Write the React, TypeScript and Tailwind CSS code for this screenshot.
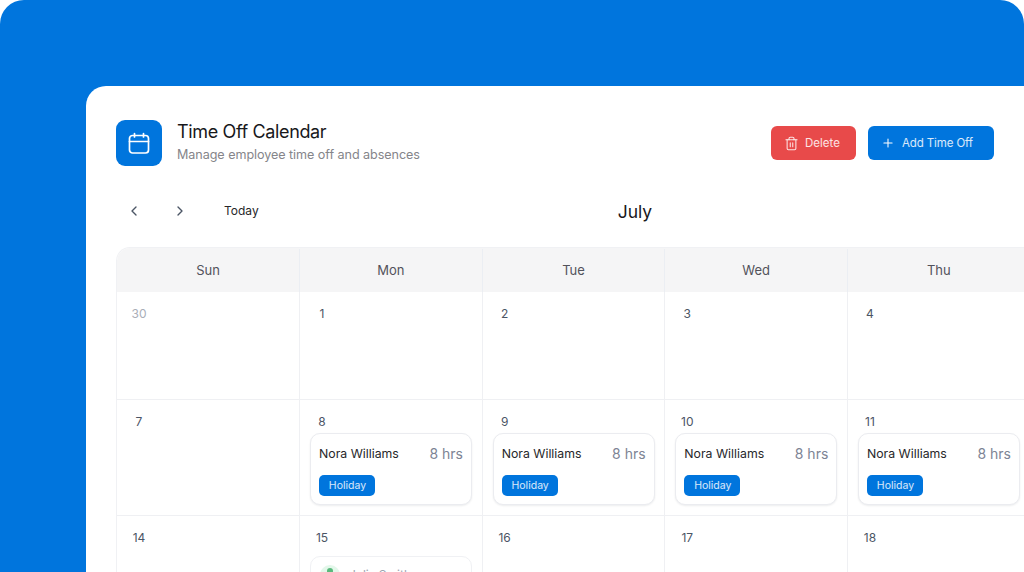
import { ChevronLeft, ChevronRight, Plus, Trash2 } from "lucide-react";

type Day = { label: string; muted?: boolean; event?: boolean; partial?: boolean };

const weekDays = ["Sun", "Mon", "Tue", "Wed", "Thu"];

const weeks: { height: string; days: Day[] }[] = [
    {
        height: "h-[108px]",
        days: [{ label: "30", muted: true }, { label: "1" }, { label: "2" }, { label: "3" }, { label: "4" }],
    },
    {
        height: "h-[116px]",
        days: [
            { label: "7" },
            { label: "8", event: true },
            { label: "9", event: true },
            { label: "10", event: true },
            { label: "11", event: true },
        ],
    },
    {
        height: "h-[80px]",
        days: [{ label: "14" }, { label: "15", partial: true }, { label: "16" }, { label: "17" }, { label: "18" }],
    },
];

function EventCard() {
    return (
        <div className="ml-[10px] mt-px h-[72px] w-[162px] rounded-[10px] border border-[#ebecf0] bg-white px-2 pt-[10px] shadow-[0_1px_2px_rgba(16,24,40,0.08)]">
            <div className="flex items-center justify-between">
                <span className="text-[12.3px] leading-5 text-[#27272a]">Nora Williams</span>
                <span className="text-[14px] leading-5 text-[#7d8494]">8 hrs</span>
            </div>
            <span className="mt-[11px] flex h-[21px] w-14 items-center justify-center rounded-[5px] bg-[#0075dd] pl-px pt-px text-[10.5px] text-white/85">
                Holiday
            </span>
        </div>
    );
}

function PartialCard() {
    return (
        <div className="ml-[10px] mt-2 h-[72px] w-[162px] rounded-[10px] border border-[#f0f1f4] bg-white pl-[9px] pt-2">
            <div className="flex items-center gap-[9px]">
                <span className="flex h-5 w-5 items-start justify-center rounded-full bg-[#e3f7ea] pt-[3px]">
                    <span className="h-[6px] w-[6px] rounded-full bg-[#59b97c]" />
                </span>
                <span className="text-[12px] text-[#9ca3af]">Julia Smith</span>
            </div>
        </div>
    );
}

export default function App() {
    return (
        <div className="h-[572px] w-[1024px] overflow-hidden bg-white font-['Inter',sans-serif]">
            <div className="h-full w-full overflow-hidden rounded-t-[24px] bg-[#0075dd] pl-[86px] pt-[86px]">
                <div className="h-[486px] w-[960px] rounded-tl-[20px] bg-white pl-[30px] pr-[22px] pt-[34px]">
                    <div className="flex w-[878px] items-center justify-between">
                        <div className="flex items-center gap-[15px]">
                            <div className="flex h-[46px] w-[46px] items-center justify-center rounded-[9px] bg-[#0075dd]">
                                <svg viewBox="0 0 24 24" className="h-6 w-6" fill="none" stroke="white" strokeWidth={1.7} strokeLinecap="round">
                                    <rect x="2.5" y="4.5" width="19" height="17.5" rx="3" />
                                    <path d="M7.5 2.5v3.5M16.5 2.5v3.5M2.5 10.5h19" />
                                </svg>
                            </div>
                            <div className="pb-px">
                                <h1 className="text-[18px] leading-6 tracking-[-0.02em] text-[#18181b]">Time Off Calendar</h1>
                                <p className="mt-px text-[12.6px] leading-5 tracking-[-0.005em] text-[#85858a]">Manage employee time off and absences</p>
                            </div>
                        </div>
                        <div className="flex items-center gap-3">
                            <button type="button" className="flex h-[34px] w-[85px] items-center gap-[6px] rounded-md bg-[#e84a4a] pl-[13px] text-[11.5px] text-white/85">
                                <Trash2 className="h-[15px] w-[15px]" strokeWidth={1.7} />
                                <span className="pt-px">Delete</span>
                            </button>
                            <button type="button" className="flex h-[34px] w-[126px] items-center gap-[7px] rounded-md bg-[#0075dd] pl-[13px] text-[11.5px] tracking-[-0.01em] text-white/85">
                                <Plus className="h-[14px] w-[14px] text-white" strokeWidth={1.8} />
                                <span className="pt-px">Add Time Off</span>
                            </button>
                        </div>
                    </div>

                    <div className="mt-[27px] flex h-9 items-center">
                        <ChevronLeft className="ml-[10px] h-4 w-4 text-[#4b5565]" />
                        <ChevronRight className="ml-[30px] h-4 w-4 text-[#4b5565]" />
                        <span className="ml-[36px] text-[12px] text-[#27272a]">Today</span>
                        <span className="ml-[359px] pt-[2px] text-[17.5px] text-[#18181b]">July</span>
                    </div>

                    <div className="mt-[18px] w-[916px] overflow-hidden rounded-tl-[14px] border-l border-t border-[#f0f1f4]">
                        <div className="grid h-[44px] grid-cols-[183px_182.67px_182.67px_182.67px_182.67px] bg-[#f5f5f6] pt-px">
                            {weekDays.map((day) => (
                                <div key={day} className="flex items-center justify-center border-r border-[#ebeef3] text-[13px] text-[#52525b]">
                                    {day}
                                </div>
                            ))}
                        </div>
                        {weeks.map((week, index) => (
                            <div key={index} className={`grid grid-cols-[183px_182.67px_182.67px_182.67px_182.67px] border-b border-[#eff0f3] ${week.height}`}>
                                {week.days.map((day) => (
                                    <div key={day.label} className="border-r border-[#eff0f3] pt-3">
                                        <div className={`ml-3 w-5 text-center text-[12px] leading-5 ${day.muted ? "text-[#a9aeb8]" : "text-[#4b5565]"}`}>{day.label}</div>
                                        {day.event ? <EventCard /> : null}
                                        {day.partial ? <PartialCard /> : null}
                                    </div>
                                ))}
                            </div>
                        ))}
                    </div>
                </div>
            </div>
        </div>
    );
}
